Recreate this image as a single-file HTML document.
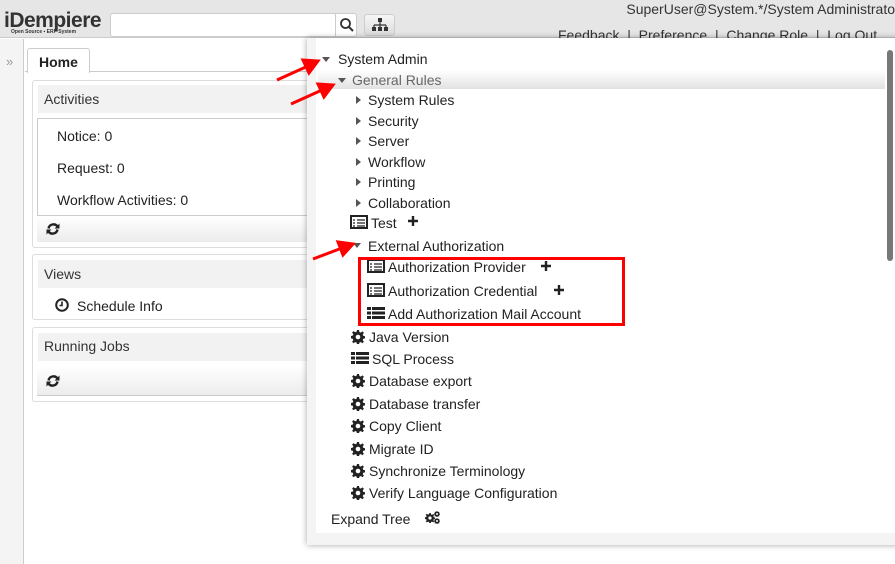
<!DOCTYPE html>
<html><head><meta charset="utf-8"><style>
*{margin:0;padding:0;box-sizing:border-box}
body{width:895px;height:564px;overflow:hidden;background:#fff;font-family:"Liberation Sans","DejaVu Sans",sans-serif;font-size:14px;color:#333;position:relative}
.a{position:absolute;white-space:nowrap}
.t{position:absolute;white-space:nowrap;line-height:18px;color:#222}
.tri-d{position:absolute;width:0;height:0;border-left:4px solid transparent;border-right:4px solid transparent;border-top:5px solid #555}
.tri-r{position:absolute;width:0;height:0;border-top:4px solid transparent;border-bottom:4px solid transparent;border-left:5px solid #555}
</style></head><body>
<svg width="0" height="0" style="position:absolute"><defs>
<g id="gear"><path d="M6 0h2l.4 2 1.4.6 1.7-1.2 1.4 1.4-1.2 1.7.6 1.4 2 .4v2l-2 .4-.6 1.4 1.2 1.7-1.4 1.4-1.7-1.2-1.4.6-.4 2H6l-.4-2-1.4-.6-1.7 1.2-1.4-1.4 1.2-1.7-.6-1.4-2-.4V6l2-.4.6-1.4-1.2-1.7 1.4-1.4 1.7 1.2 1.4-.6z" fill="#222"/><circle cx="7" cy="7" r="2.3" fill="#fff"/></g>
<g id="ref"><path d="M2.5 6.5A5 5 0 0 1 11.5 4.5" fill="none" stroke="#222" stroke-width="2.4"/><path d="M13.5 1.5v5h-5z" fill="#222"/><path d="M11.5 7.5A5 5 0 0 1 2.5 9.5" fill="none" stroke="#222" stroke-width="2.4"/><path d="M0.5 12.5v-5h5z" fill="#222"/></g>
</defs></svg>
<!-- header -->
<div class="a" style="left:0;top:0;width:895px;height:38px;background:#e6e6e6;border-bottom:1px solid #ccc"></div>
<div class="a" style="left:4px;top:9px;font-size:21px;font-weight:bold;color:#333;letter-spacing:-0.5px;line-height:24px">iDempiere</div>
<div class="a" style="left:11px;top:29px;font-size:5px;font-weight:bold;color:#333;line-height:6px">Open Source ▪ ERP System</div>
<div class="a" style="left:110px;top:13px;width:247px;height:24px;background:#fff;border:1px solid #ccc;border-radius:3px"></div>
<div class="a" style="left:335px;top:13px;width:22px;height:24px;border-left:1px solid #ccc"></div>
<svg class="a" style="left:339px;top:17px" width="16" height="16" viewBox="0 0 16 16"><circle cx="6.5" cy="6.5" r="4.5" fill="none" stroke="#333" stroke-width="1.8"/><path d="M10 10l4 4" stroke="#333" stroke-width="2"/></svg>
<div class="a" style="left:364px;top:14px;width:31px;height:22px;background:linear-gradient(#f6f6f6,#dcdcdc);border:1px solid #ccc;border-radius:3px"></div>
<svg class="a" style="left:372px;top:17px" width="16" height="15" viewBox="0 0 16 15"><rect x="6" y="1" width="4" height="4" fill="#333"/><path d="M8 5v3M2 8h12M2 8v2M8 8v2M14 8v2" stroke="#333" stroke-width="1.2" fill="none"/><rect x="0" y="10" width="4" height="4" fill="#333"/><rect x="6" y="10" width="4" height="4" fill="#333"/><rect x="12" y="10" width="4" height="4" fill="#333"/></svg>
<div class="a" style="right:0;top:0;font-size:14px;line-height:18px;color:#333">SuperUser@System.*/System Administrato</div>
<div class="a" style="left:558px;top:26px;font-size:14px;line-height:18px;color:#333">Feedback &nbsp;| &nbsp;Preference &nbsp;| &nbsp;Change Role &nbsp;| &nbsp;Log Out</div>
<!-- left sidebar -->
<div class="a" style="left:0;top:39px;width:24px;height:525px;background:#f4f4f4;border-right:1px solid #ccc"></div>
<div class="a" style="left:6px;top:54px;font-size:13px;color:#999">»</div>
<!-- tab -->
<div class="a" style="left:25px;top:71px;width:300px;height:1px;background:#ccc"></div>
<div class="a" style="left:27px;top:48px;width:63px;height:25px;background:#fff;border:1px solid #ccc;border-bottom:none;border-radius:3px 3px 0 0"></div>
<div class="a" style="left:39px;top:54px;font-weight:bold;font-size:14px;color:#222">Home</div>
<!-- panels -->
<div class="a" style="left:32px;top:80px;width:290px;height:168px;border:1px solid #ddd;border-radius:3px"></div>
<div class="a" style="left:38px;top:85px;width:280px;height:28px;background:#f2f2f2"></div>
<div class="a" style="left:44px;top:91px;color:#333">Activities</div>
<div class="a" style="left:37px;top:118px;width:285px;height:98px;border:1px solid #ccc"></div>
<div class="a" style="left:57px;top:128px;color:#222">Notice: 0</div>
<div class="a" style="left:57px;top:160px;color:#222">Request: 0</div>
<div class="a" style="left:57px;top:192px;color:#222">Workflow Activities: 0</div>
<div class="a" style="left:37px;top:216px;width:285px;height:26px;background:linear-gradient(#fff,#ececec)"></div>
<svg class="a" style="left:46px;top:222px" width="14" height="14" viewBox="0 0 14 14"><use href="#ref"/></svg>
<div class="a" style="left:32px;top:254px;width:290px;height:66px;border:1px solid #ddd;border-radius:3px"></div>
<div class="a" style="left:38px;top:260px;width:280px;height:28px;background:#f2f2f2"></div>
<div class="a" style="left:44px;top:266px;color:#333">Views</div>
<svg class="a" style="left:55px;top:298px" width="14" height="14" viewBox="0 0 14 14"><circle cx="7" cy="7" r="5.8" fill="none" stroke="#222" stroke-width="2"/><path d="M7 3.5V7.5H4.5" fill="none" stroke="#222" stroke-width="1.6"/></svg>
<div class="a" style="left:77px;top:298px;color:#222">Schedule Info</div>
<div class="a" style="left:32px;top:327px;width:290px;height:75px;border:1px solid #ddd;border-radius:3px"></div>
<div class="a" style="left:38px;top:333px;width:280px;height:28px;background:#f2f2f2"></div>
<div class="a" style="left:44px;top:338px;color:#333">Running Jobs</div>
<div class="a" style="left:37px;top:366px;width:285px;height:30px;background:linear-gradient(#fff,#ececec);border-bottom:1px solid #ccc"></div>
<svg class="a" style="left:46px;top:374px" width="14" height="14" viewBox="0 0 14 14"><use href="#ref"/></svg>
<!-- popup -->
<div class="a" style="left:307px;top:38px;width:600px;height:507px;background:#f4f4f4;box-shadow:0 0 6px rgba(0,0,0,.35)"></div>
<div class="a" style="left:316px;top:38px;width:590px;height:495px;background:#fff"></div>
<div class="a" style="left:318px;top:70px;width:567px;height:19px;background:linear-gradient(#fff,#e2e2e2)"></div>
<div class="a" style="left:887px;top:50px;width:6px;height:211px;background:#777;border-radius:3px"></div>
<div class="tri-d" style="left:322px;top:57px"></div><div class="t" style="left:338px;top:50px">System Admin</div>
<div class="tri-d" style="left:338px;top:78px"></div><div class="t" style="left:352px;top:71px;color:#666">General Rules</div>
<div class="tri-r" style="left:356px;top:96px"></div><div class="t" style="left:368px;top:91px">System Rules</div>
<div class="tri-r" style="left:356px;top:117px"></div><div class="t" style="left:368px;top:112px">Security</div>
<div class="tri-r" style="left:356px;top:137px"></div><div class="t" style="left:368px;top:132px">Server</div>
<div class="tri-r" style="left:356px;top:158px"></div><div class="t" style="left:368px;top:153px">Workflow</div>
<div class="tri-r" style="left:356px;top:178px"></div><div class="t" style="left:368px;top:173px">Printing</div>
<div class="tri-r" style="left:356px;top:199px"></div><div class="t" style="left:368px;top:194px">Collaboration</div>
<svg class="a" style="left:350px;top:215px" width="18" height="14" viewBox="0 0 18 14"><rect x="1" y="1" width="16" height="12" fill="none" stroke="#222" stroke-width="2"/><path d="M3 5h2M7 5h8M3 8h2M7 8h8M3 11h2M7 11h8" stroke="#222" stroke-width="1.3"/></svg>
<div class="t" style="left:371px;top:214px">Test</div>
<svg class="a" style="left:408px;top:216px" width="10" height="10" viewBox="0 0 10 10"><path d="M5 0v10M0 5h10" stroke="#222" stroke-width="2.4"/></svg>
<div class="tri-d" style="left:353px;top:243px"></div><div class="t" style="left:368px;top:237px">External Authorization</div>
<svg class="a" style="left:367px;top:259px" width="18" height="14" viewBox="0 0 18 14"><rect x="1" y="1" width="16" height="12" fill="none" stroke="#222" stroke-width="2"/><path d="M3 5h2M7 5h8M3 8h2M7 8h8M3 11h2M7 11h8" stroke="#222" stroke-width="1.3"/></svg>
<div class="t" style="left:388px;top:258px">Authorization Provider</div>
<svg class="a" style="left:541px;top:261px" width="10" height="10" viewBox="0 0 10 10"><path d="M5 0v10M0 5h10" stroke="#222" stroke-width="2.4"/></svg>
<svg class="a" style="left:367px;top:283px" width="18" height="14" viewBox="0 0 18 14"><rect x="1" y="1" width="16" height="12" fill="none" stroke="#222" stroke-width="2"/><path d="M3 5h2M7 5h8M3 8h2M7 8h8M3 11h2M7 11h8" stroke="#222" stroke-width="1.3"/></svg>
<div class="t" style="left:388px;top:282px">Authorization Credential</div>
<svg class="a" style="left:554px;top:285px" width="10" height="10" viewBox="0 0 10 10"><path d="M5 0v10M0 5h10" stroke="#222" stroke-width="2.4"/></svg>
<svg class="a" style="left:367px;top:306px" width="18" height="14" viewBox="0 0 18 14"><path d="M0 1h4v3H0zM5 1h13v3H5zM0 5.5h4v3H0zM5 5.5h13v3H5zM0 10h4v3H0zM5 10h13v3H5z" fill="#222"/></svg>
<div class="t" style="left:388px;top:305px">Add Authorization Mail Account</div>
<div class="a" style="left:358px;top:257px;width:267px;height:69px;border:3px solid #f00"></div>
<svg class="a" style="left:351px;top:330px" width="14" height="14" viewBox="0 0 14 14"><use href="#gear"/></svg><div class="t" style="left:369px;top:328px">Java Version</div>
<svg class="a" style="left:351px;top:351px" width="18" height="14" viewBox="0 0 18 14"><path d="M0 1h4v3H0zM5 1h13v3H5zM0 5.5h4v3H0zM5 5.5h13v3H5zM0 10h4v3H0zM5 10h13v3H5z" fill="#222"/></svg>
<div class="t" style="left:372px;top:350px">SQL Process</div>
<svg class="a" style="left:351px;top:374px" width="14" height="14" viewBox="0 0 14 14"><use href="#gear"/></svg><div class="t" style="left:369px;top:372px">Database export</div>
<svg class="a" style="left:351px;top:397px" width="14" height="14" viewBox="0 0 14 14"><use href="#gear"/></svg><div class="t" style="left:369px;top:395px">Database transfer</div>
<svg class="a" style="left:351px;top:419px" width="14" height="14" viewBox="0 0 14 14"><use href="#gear"/></svg><div class="t" style="left:369px;top:417px">Copy Client</div>
<svg class="a" style="left:351px;top:442px" width="14" height="14" viewBox="0 0 14 14"><use href="#gear"/></svg><div class="t" style="left:369px;top:440px">Migrate ID</div>
<svg class="a" style="left:351px;top:464px" width="14" height="14" viewBox="0 0 14 14"><use href="#gear"/></svg><div class="t" style="left:369px;top:462px">Synchronize Terminology</div>
<svg class="a" style="left:351px;top:486px" width="14" height="14" viewBox="0 0 14 14"><use href="#gear"/></svg><div class="t" style="left:369px;top:484px">Verify Language Configuration</div>
<div class="t" style="left:331px;top:510px">Expand Tree</div>
<svg class="a" style="left:425px;top:513px" width="10" height="10" viewBox="0 0 14 14"><use href="#gear"/></svg>
<svg class="a" style="left:434px;top:511px" width="6" height="6" viewBox="0 0 14 14"><use href="#gear"/></svg>
<svg class="a" style="left:434px;top:518px" width="6" height="6" viewBox="0 0 14 14"><use href="#gear"/></svg>
<!-- arrows -->
<svg class="a" style="left:0;top:0" width="895" height="564">
<g stroke="#f00" stroke-width="3" fill="#f00">
<line x1="277" y1="80" x2="308" y2="66"/><path d="M318 61 L303 60 L309 73 Z"/>
<line x1="291" y1="104" x2="322" y2="90"/><path d="M333 85 L318 84 L324 97 Z"/>
<line x1="313" y1="259" x2="342" y2="248"/><path d="M353 244 L338 242 L343 255 Z"/>
</g></svg>
</body></html>
